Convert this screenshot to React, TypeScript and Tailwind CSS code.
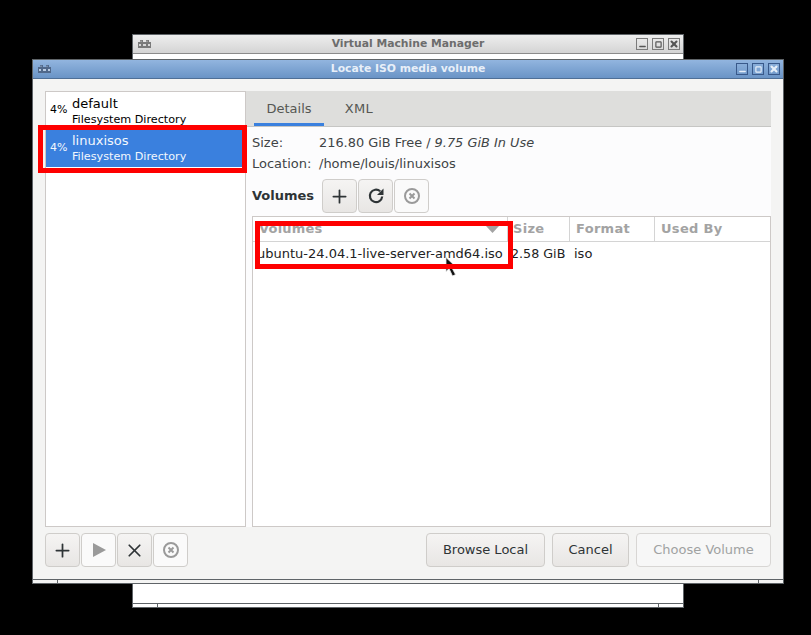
import { Plus, X, Minus, Square } from 'lucide-react';

const font = { fontFamily: '"DejaVu Sans", sans-serif' };

const VmIcon = ({ color, speck }: { color: string; speck: string }) => (
  <svg width="13" height="8" viewBox="0 0 13 8" className="ml-[2px]">
    <path d="M0 2h2V0h3v2h3V0h3v2h2v6H0z" fill={color} />
    <path d="M1 4h2v2H1zM5 4h3v2H5zM10 4h2v2h-2zM2.5 0.8h1v1h-1zM8.5 0.8h1v1h-1z" fill={speck} />
  </svg>
);

const WinButton = ({ className, children }: { className: string; children: React.ReactNode }) => (
  <div className={`w-[12px] h-[12px] border flex items-center justify-center ${className}`}>{children}</div>
);

const WinControls = ({ border, icon }: { border: string; icon: string }) => (
  <div className="flex gap-[4px] justify-self-end">
    <WinButton className={border}>
      <Minus size={9} strokeWidth={4} className={`${icon} translate-y-[2px]`} />
    </WinButton>
    <WinButton className={border}>
      <Square size={7} strokeWidth={4} className={icon} />
    </WinButton>
    <WinButton className={border}>
      <X size={10} strokeWidth={5} className={icon} />
    </WinButton>
  </div>
);

const ToolButton = ({ children, muted }: { children: React.ReactNode; muted?: boolean }) => (
  <button
    className={`w-[35px] h-[34px] mr-[1px] rounded-[4px] border border-[#cfcdca] flex items-center justify-center ${
      muted ? 'bg-[#fafafa]' : 'bg-gradient-to-b from-[#f5f4f3] to-[#e8e6e4]'
    }`}
  >
    {children}
  </button>
);

const StopIcon = () => (
  <svg width="18" height="18" viewBox="0 0 18 18" fill="none" stroke="#9a9a9a">
    <circle cx="9" cy="9" r="7" strokeWidth="2" />
    <path d="M6.5 6.5l5 5M11.5 6.5l-5 5" strokeWidth="2" />
  </svg>
);

const RefreshIcon = () => (
  <svg width="18" height="18" viewBox="0 0 18 18" fill="none">
    <path d="M15.2 9.5a6.2 6.2 0 1 1-2-5.2" stroke="#2e3436" strokeWidth="2.2" />
    <path d="M16.5 1.5v6.5H10z" fill="#2e3436" />
  </svg>
);

const PoolRow = ({ name, selected }: { name: string; selected?: boolean }) => (
  <div className={`flex items-center pl-[4px] ${selected ? 'h-[38px] bg-[#3a80de] text-[#f2f7fd]' : 'h-[37px] text-black'}`}>
    <span className="w-[22px] text-[11px]">4%</span>
    <div className={`flex flex-col leading-none ${selected ? 'pt-[1px]' : 'pt-[2px]'}`}>
      <span className="text-[13px] leading-[16px]">{name}</span>
      <span className="text-[11.2px] leading-[15px]">Filesystem Directory</span>
    </div>
  </div>
);

const HeaderCell = ({ label, className }: { label: string; className: string }) => (
  <div className={`h-full flex items-center border-r border-[#d4d4d4] text-[13px] font-bold text-[#a3a3a3] tracking-[0.3px] ${className}`}>
    {label}
  </div>
);

export default function App() {
  return (
    <div className="relative w-[811px] h-[635px] bg-black overflow-hidden text-[#2e3436]" style={font}>
      {/* Virtual Machine Manager, behind */}
      <div className="absolute left-[132px] top-[34px] w-[552px] h-[574px] bg-white border border-[#5f6468] flex flex-col">
        <div className="h-[19px] shrink-0 bg-gradient-to-b from-[#eeeeee] to-[#d4d4d4] border-b border-[#8b8b8b] grid grid-cols-[1fr_auto_1fr] items-center px-[3px]">
          <VmIcon color="#7a7a7a" speck="#d8d8d8" />
          <span className="text-[10.8px] font-bold text-[#6d6d6d]">Virtual Machine Manager</span>
          <WinControls border="border-[#7b7b7b]" icon="text-[#555]" />
        </div>
        <div className="flex-1" />
        <div className="h-[4px] shrink-0 border-t border-[#5f6468] flex">
          <div className="w-[25px] border-r border-[#5f6468]" />
          <div className="flex-1" />
          <div className="w-[25px] border-l border-[#5f6468]" />
        </div>
      </div>

      {/* Locate ISO media volume */}
      <div className="absolute left-[32px] top-[59px] w-[752px] h-[525px] bg-[#f4f4f3] border border-[#5f6468] flex flex-col">
        <div className="h-[19px] shrink-0 bg-gradient-to-b from-[#92b5df] to-[#6a94c6] border-b border-[#4f6f96] grid grid-cols-[1fr_auto_1fr] items-center px-[3px]">
          <VmIcon color="#50688a" speck="#b9cbe2" />
          <span className="text-[10.8px] font-bold text-[#e8eff8]">Locate ISO media volume</span>
          <WinControls border="border-[#39598a]" icon="text-[#e6eef8]" />
        </div>

        <div className="flex-1 flex pt-[12px] pl-[12px] pr-[12px] min-h-0">
          {/* Pool list */}
          <div className="w-[201px] bg-white border border-[#cdc9c7] flex flex-col">
            <PoolRow name="default" />
            <PoolRow name="linuxisos" selected />
          </div>

          {/* Details pane */}
          <div className="flex-1 flex flex-col min-w-0 bg-[#fcfcfd]">
            <div className="h-[36px] shrink-0 bg-[#dededc] border-b border-[#c6c6c4] flex pl-[8px]">
              <div className="w-[70px] h-full border-b-[3px] border-[#3a80de] flex items-center justify-center pt-[3px] text-[13px] text-[#555753]">
                Details
              </div>
              <div className="w-[70px] h-full flex items-center justify-center text-[13px] tracking-[0.3px] text-[#555753]">XML</div>
            </div>

            <div className="flex-1 flex flex-col pl-[6px] min-h-0">
              <div className="grid grid-cols-[67px_1fr] text-[13px] leading-[21px] text-[#3f4446] mt-[5px]">
                <span>Size:</span>
                <span className="text-[12.9px]">
                  216.80 GiB Free / <em>9.75 GiB In Use</em>
                </span>
                <span>Location:</span>
                <span>/home/louis/linuxisos</span>
              </div>

              <div className="flex items-center mt-[5px]">
                <span className="text-[13px] font-bold w-[70px]">Volumes</span>
                <div className="flex">
                  <ToolButton>
                    <Plus size={21} strokeWidth={2} className="text-[#2e3436]" />
                  </ToolButton>
                  <ToolButton>
                    <RefreshIcon />
                  </ToolButton>
                  <ToolButton muted>
                    <StopIcon />
                  </ToolButton>
                </div>
              </div>

              {/* Volume table */}
              <div className="flex-1 mt-[3px] bg-white border border-[#cdc9c7] flex flex-col text-black">
                <div className="h-[25px] shrink-0 flex border-b border-[#d4d4d4]">
                  <div className="w-[255px] h-full flex items-center justify-between pl-[6px] pr-[8px] border-r border-[#d4d4d4] text-[13px] font-bold text-[#a3a3a3] tracking-[0.2px]">
                    Volumes
                    <svg width="13" height="7" viewBox="0 0 13 7">
                      <path d="M0 0h13l-6.5 7z" fill="#a3a3a3" />
                    </svg>
                  </div>
                  <HeaderCell label="Size" className="w-[62px] pl-[5px]" />
                  <HeaderCell label="Format" className="w-[85px] pl-[6px]" />
                  <HeaderCell label="Used By" className="flex-1 pl-[6px] border-r-0" />
                </div>
                <div className="h-[24px] flex items-center text-[13px] text-[#222]">
                  <span className="w-[258px] pl-[4px] whitespace-nowrap">ubuntu-24.04.1-live-server-amd64.iso</span>
                  <span className="w-[63px] text-[12.7px] whitespace-nowrap">2.58 GiB</span>
                  <span>iso</span>
                </div>
              </div>
            </div>
          </div>
        </div>

        {/* Bottom buttons */}
        <div className="h-[52px] shrink-0 flex items-start justify-between pl-[12px] pr-[12px] pt-[6px]">
          <div className="flex">
            <ToolButton>
              <Plus size={21} strokeWidth={2} className="text-[#2e3436]" />
            </ToolButton>
            <ToolButton muted>
              <svg width="14" height="14" viewBox="0 0 14 14">
                <path d="M1 0l13 7-13 7z" fill="#9a9a9a" />
              </svg>
            </ToolButton>
            <ToolButton>
              <X size={21} strokeWidth={2} className="text-[#2e3436]" />
            </ToolButton>
            <ToolButton muted>
              <StopIcon />
            </ToolButton>
          </div>
          <div className="flex gap-[7px] text-[13px]">
            <button className="w-[119px] h-[34px] rounded-[4px] border border-[#cfcdca] bg-gradient-to-b from-[#f5f4f3] to-[#e8e6e4]">
              Browse Local
            </button>
            <button className="w-[77px] h-[34px] rounded-[4px] border border-[#cfcdca] bg-gradient-to-b from-[#f5f4f3] to-[#e8e6e4]">
              Cancel
            </button>
            <button className="w-[135px] h-[34px] rounded-[4px] border border-[#d8d6d4] bg-[#f7f7f7] text-[#a0a2a2]">
              Choose Volume
            </button>
          </div>
        </div>

        <div className="h-[4px] shrink-0 border-t border-[#5f6468] flex">
          <div className="w-[25px] border-r border-[#5f6468]" />
          <div className="flex-1" />
          <div className="w-[25px] border-l border-[#5f6468]" />
        </div>
      </div>

      {/* Mouse cursor, the red box is drawn over it */}
      <svg className="absolute left-[445px] top-[257px]" width="13" height="21" viewBox="0 0 13 21">
        <path d="M1 0.5v14l3-3 3.5 7.5 3-1.5-3.5-6.5h5z" fill="#111" stroke="#e8e8e8" strokeWidth="0.8" />
      </svg>

      {/* Red highlight boxes drawn over the screenshot */}
      <div className="absolute left-[38px] top-[125px] w-[209px] h-[48px] border-[5px] border-[#fe0000]" />
      <div className="absolute left-[255px] top-[221px] w-[258px] h-[48px] border-[5px] border-[#fe0000]" />
    </div>
  );
}
